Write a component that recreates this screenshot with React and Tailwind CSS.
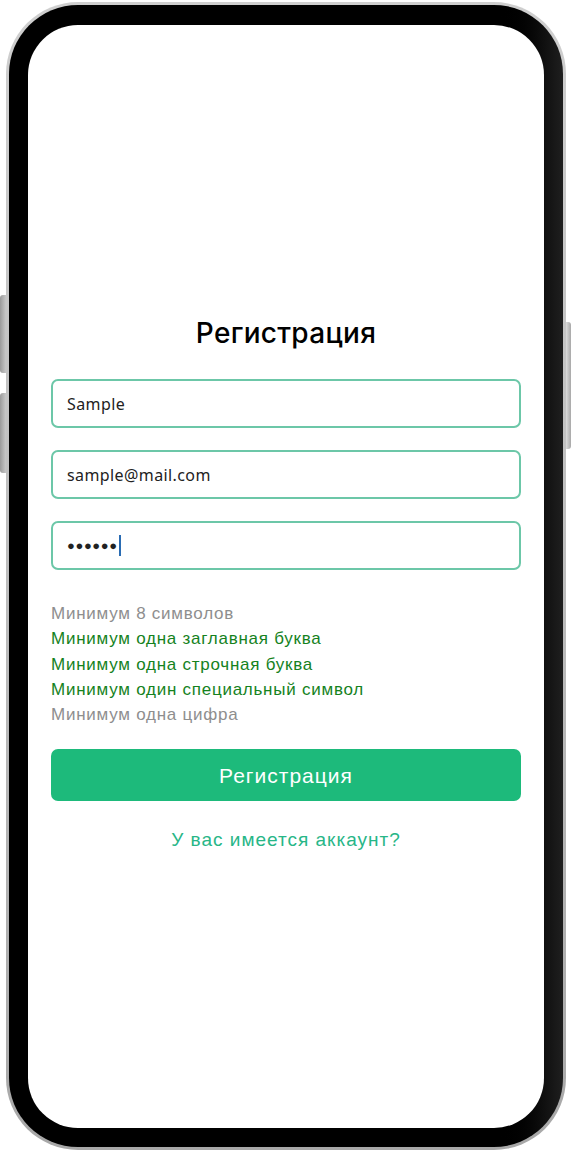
const rules = [
  { text: "Минимум 8 символов", ok: false },
  { text: "Минимум одна заглавная буква", ok: true },
  { text: "Минимум одна строчная буква", ok: true },
  { text: "Минимум один специальный символ", ok: true },
  { text: "Минимум одна цифра", ok: false },
];

function Field({ children }) {
  return (
    <div className="flex h-[49px] items-center rounded-[7px] border-2 border-[#6cc7a8] px-[14px] text-[16px] tracking-[0.4px] text-[#222]">
      {children}
    </div>
  );
}

export default function App() {
  return (
    <div className="h-[1152px] w-[573px] bg-white pl-[6px] pt-[2px] font-['Liberation_Sans',Arial,sans-serif]">
      <div className="relative h-[1148px] w-[560px] rounded-[72px] bg-gradient-to-b from-[#cfcfcf] via-[#bdbdbd] to-[#a8a8a8] p-[3px]">
        {/* side buttons */}
        <div className="absolute left-[-6px] top-[293px] h-[78px] w-[6px] rounded-l-[3px] bg-gradient-to-r from-[#9a9a9a] to-[#c8c8c8]" />
        <div className="absolute left-[-6px] top-[391px] h-[80px] w-[6px] rounded-l-[3px] bg-gradient-to-r from-[#9a9a9a] to-[#c8c8c8]" />
        <div className="absolute right-[-5px] top-[320px] h-[127px] w-[5px] rounded-r-[3px] bg-gradient-to-l from-[#a8a8a8] to-[#dcdcdc]" />

        <div className="h-full w-full rounded-[69px] bg-gradient-to-r from-black via-black via-[88%] to-[#1f1f1f] px-[19px] pb-[19px] pt-[20px]">
          <div className="flex h-full w-full flex-col rounded-[50px] bg-white px-[23px] pt-[290px]">
            <h1 className="text-center font-['Inter',sans-serif] text-[28px] font-medium leading-[36px] tracking-[0.3px] text-black">
              Регистрация
            </h1>

            <div className="mt-[28px] flex flex-col gap-[22px] font-['Noto_Sans',sans-serif]">
              <Field>Sample</Field>
              <Field>sample@mail.com</Field>
              <Field>
                <span className="text-[13px] tracking-[0.6px]">●●●●●●</span>
                <span className="ml-[1px] h-[21px] w-[2.5px] bg-[#2a6cb3]" />
              </Field>
            </div>

            <ul className="mt-[31px] flex flex-col text-[17px] leading-[25.3px] tracking-[0.75px]">
              {rules.map((r) => (
                <li key={r.text} className={r.ok ? "text-[#15821d]" : "text-[#8e8e8e]"}>
                  {r.text}
                </li>
              ))}
            </ul>

            <button className="mt-[22px] h-[52px] w-full rounded-[7px] bg-[#1dba7b] text-[21px] tracking-[1px] text-white">
              Регистрация
            </button>

            <p className="mt-[27px] text-center text-[19px] leading-[24px] tracking-[1px] text-[#27b687]">
              У вас имеется аккаунт?
            </p>
          </div>
        </div>
      </div>
    </div>
  );
}
